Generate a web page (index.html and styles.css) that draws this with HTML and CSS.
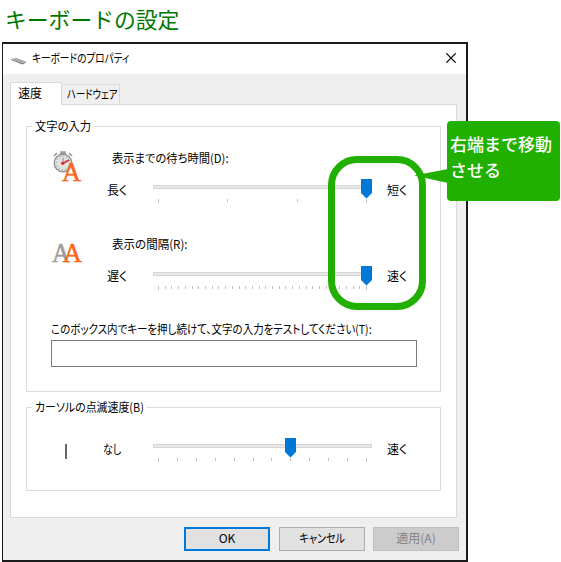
FILE: index.html
```html
<!DOCTYPE html>
<html lang="ja">
<head>
<meta charset="utf-8">
<title>キーボードの設定</title>
<link rel="stylesheet" href="styles.css">
</head>
<body>
<h1>キーボードの設定</h1>
<main class="window">
  <header class="titlebar">
    <svg class="kbd" width="16" height="8" viewBox="0 0 16 8"><path d="M0 1.8 4.5.8 15 4.5 11.5 6.8Z" fill="#c4c4c4"/><path d="M0 2 11.5 6.2 15 4.5V5.5L11.5 7.5 0 3Z" fill="#777"/><path d="M3 2 11 5M5 1.5 13 4.3" stroke="#888" stroke-width=".6"/></svg>
    <span class="t t-title">キーボードのプロパティ</span>
    <svg class="close" width="10" height="10" viewBox="0 0 10 10"><path d="M.3.3 9.7 9.7M9.7.3.3 9.7" stroke="#000" stroke-width="1.2"/></svg>
  </header>
  <nav class="tabs">
    <div class="tab active"><span class="t">速度</span></div>
    <div class="tab"><span class="t t-hard">ハードウェア</span></div>
  </nav>
  <section class="panel">
    <fieldset class="group typing">
      <legend><span class="t t-input">文字の入力</span></legend>
      <div class="setting delay">
        <svg class="icon" width="32" height="34" viewBox="0 0 32 34">
          <path d="M9 1h4v3H9zM2 5l3-3M20 5l-3-3" fill="#999" stroke="#999" stroke-width="1.6"/>
          <circle cx="11" cy="12" r="8.8" fill="#e2e2e2" stroke="#929292" stroke-width="1.4"/>
          <circle cx="11" cy="12" r="6.7" fill="none" stroke="#777" stroke-width="1" stroke-dasharray="1 2.5"/>
          <path d="M10 13 17 9" stroke="#e02828" stroke-width="1.5"/><path d="M11 7v5" stroke="#888"/><circle cx="10.5" cy="12.3" r="1.5" fill="#d22"/>
          <text x="10" y="30" class="letter orange" textLength="19" lengthAdjust="spacingAndGlyphs">A</text>
        </svg>
        <div class="controls">
          <div class="caption"><span class="t t-delay">表示までの待ち時間(D):</span></div>
          <div class="range"><span class="end"><span class="t t-ku">長く</span></span>
            <svg class="slider" width="220" height="26" viewBox="0 0 220 26"><rect x=".5" y="6.5" width="218" height="3" class="track"/><path class="ticks" d="M5.5 20v4M74.5 20v3M144.5 20v3M213.5 20v4"/><path class="thumb" d="M208 0h11v14l-5.5 5.5L208 14Z"/></svg>
            <span class="end far"><span class="t t-ku">短く</span></span></div>
        </div>
      </div>
      <div class="setting repeat">
        <svg class="icon" width="32" height="34" viewBox="0 0 32 34"><text x="0" y="22" class="letter gray" textLength="18" lengthAdjust="spacingAndGlyphs">A</text><text x="11" y="22" class="letter orange" textLength="19" lengthAdjust="spacingAndGlyphs">A</text></svg>
        <div class="controls">
          <div class="caption"><span class="t t-repeat">表示の間隔(R):</span></div>
          <div class="range"><span class="end"><span class="t t-ku">遅く</span></span>
            <svg class="slider" width="220" height="26" viewBox="0 0 220 26"><rect x=".5" y="6.5" width="218" height="3" class="track"/><path class="ticks" d="M5.5 20v4M12.5 20v3M18.5 20v3M25.5 20v3M32.5 20v3M39.5 20v3M45.5 20v3M52.5 20v3M59.5 20v3M65.5 20v3M72.5 20v3M79.5 20v3M86.5 20v3M92.5 20v3M99.5 20v3M106.5 20v3M112.5 20v3M119.5 20v3M126.5 20v3M132.5 20v3M139.5 20v3M146.5 20v3M153.5 20v3M159.5 20v3M166.5 20v3M173.5 20v3M179.5 20v3M186.5 20v3M193.5 20v3M200.5 20v3M206.5 20v3M213.5 20v4"/><path class="thumb" d="M208 0h11v14l-5.5 5.5L208 14Z"/></svg>
            <span class="end far"><span class="t t-ku">速く</span></span></div>
        </div>
      </div>
      <div class="test"><label for="test"><span class="t t-test">このボックス内でキーを押し続けて、文字の入力をテストしてください(T):</span></label>
      <input id="test" type="text"></div>
    </fieldset>
    <fieldset class="group blink">
      <legend><span class="t t-blink">カーソルの点滅速度(B)</span></legend>
      <div class="range"><i class="caret"></i><span class="end"><span class="t t-nashi">なし</span></span>
        <svg class="slider" width="220" height="26" viewBox="0 0 220 26"><rect x=".5" y="6.5" width="218" height="3" class="track"/><path class="ticks" d="M5.5 20v4M24.5 20v3M43.5 20v3M62.5 20v3M81.5 20v3M100.5 20v3M118.5 20v3M137.5 20v3M156.5 20v3M175.5 20v3M194.5 20v3M213.5 20v4"/><path class="thumb" d="M132 0h11v14l-5.5 5.5L132 14Z"/></svg>
        <span class="end far"><span class="t t-ku">速く</span></span></div>
    </fieldset>
  </section>
  <footer>
    <button class="ok"><span class="t">OK</span></button>
    <button><span class="t t-cancel">キャンセル</span></button>
    <button disabled><span class="t t-apply">適用(A)</span></button>
  </footer>
</main>
<div class="ring"></div>
<svg class="pointer" width="34" height="14" viewBox="0 0 34 14"><path d="M0 6.5 34 0v14Z" fill="#21b002"/></svg>
<aside class="callout">右端まで移動<br>させる</aside>
</body>
</html>
```
FILE: styles.css
```css
* { box-sizing: border-box; }
body { margin: 0; width: 561px; height: 562px; overflow: hidden; position: relative; background: #fff; color: #000; font: 12px/16px "Noto Sans CJK JP", sans-serif; }
h1 { margin: 0; height: 42px; padding: 3px 0 0 5px; font-size: 21.8px; line-height: 32px; font-weight: 400; color: #007800; }
.window { margin-left: 2px; width: 466px; height: 520px; border: 2px solid #1b1b1b; border-left-width: 1px; background: #efefef; }
.t { display: inline-block; white-space: nowrap; transform-origin: 0 50%; font-feature-settings: "palt"; }
.t-title { transform: scaleX(.805); }
.t-hard { transform: scaleX(.78); }
.t-input { transform: scaleX(.94); margin-right: -4px; }
.t-delay { transform: scaleX(.94); }
.t-repeat { transform: scaleX(.96); }
.t-test { transform: scaleX(.874); }
.t-blink { transform: scaleX(.91); margin-right: -11px; }
.t-nashi { transform: scaleX(.84); }
.titlebar { display: flex; height: 30px; background: #fff; padding: 6px 10px 0 8px; }
.kbd { margin: 7px 5px 0 0; }
.close { margin: 3px 0 0 auto; }
.tabs { display: flex; align-items: flex-end; height: 31px; padding-left: 7px; position: relative; z-index: 1; }
.tab { height: 21px; width: 58px; border: 1px solid #dadada; border-left: 0; background: #f0f0f0; padding: 1px 0 0 5px; }
.tab.active { height: 23px; width: 52px; background: #fff; border-left: 1px solid #dadada; border-bottom: 0; padding: 2px 0 0 7px; }
.panel { width: 447px; height: 414px; margin: -1px 0 0 7px; border: 1px solid #dadada; background: #fff; padding: 13px 15px 0; }
.group { width: 415px; min-width: 0; margin: 0; padding: 0; border: 1px solid #dcdcdc; }
.group legend { height: 16px; margin-left: 5px; padding: 0 3px; }
.typing { height: 274px; }
.blink { height: 92px; margin-top: 7px; }
.setting { display: flex; height: 87px; }
.delay { height: 88px; padding-top: 16px; }
.repeat { padding-top: 15px; }
.icon { margin-left: 25px; overflow: visible; }
.delay .icon { margin-top: 1px; }
.repeat .icon { margin-top: 3px; }
.controls { flex: 1; margin-left: 2px; }
.caption { height: 29px; padding-left: 26px; }
.repeat .caption { height: 29px; margin-top: -1px; }
.repeat .range { margin-top: 1px; }
.range { display: flex; }
.end { width: 46px; padding-top: 3px; margin-left: 21px; }
.repeat .end { padding-top: 2px; }
.far { width: 30px; margin-left: 14px; }
.slider { display: block; flex: none; }
.track { fill: #e7eaea; stroke: #d6d6d6; }
.ticks { stroke: #c0c0c0; fill: none; }
.thumb { fill: #0078d7; }
.letter { font: 27px "Liberation Serif", serif; stroke-width: .6px; }
.orange { fill: #f7691d; stroke: #f7691d; }
.gray { fill: #9d9d9d; stroke: #9d9d9d; }
.test { padding: 12px 0 0 24px; }
.test label { display: block; height: 19px; }
.test input { display: block; width: 366px; height: 27px; border: 1px solid #7a7a7a; background: #fff; padding: 0; }
.blink .range { margin-top: 23px; }
.caret { width: 2px; height: 15px; margin: 6px 0 0 38px; background: #666; }
.blink .end { margin-left: 36px; width: 50px; }
.blink .far { margin-left: 14px; width: 30px; }
footer { display: flex; gap: 9px; padding: 9px 0 0 181px; }
button { width: 86px; height: 24px; flex: none; padding: 0 0 2px; border: 1px solid #adadad; background: #e1e1e1; color: #000; font: inherit; text-align: center; }
button + button + button { margin-left: -1px; }
button .t { transform-origin: 50% 50%; }
.t-cancel { transform: scaleX(.84); }
.ok { border: 2px solid #0078d7; }
button:disabled { background: #ccc; border-color: #bfbfbf; color: #838383; }
.ring { position: absolute; left: 328px; top: 156px; width: 98px; height: 154px; border: 7px solid #21b002; border-radius: 29px; }
.pointer { position: absolute; left: 414px; top: 169px; }
.callout { position: absolute; left: 447px; top: 121px; width: 113px; height: 80px; border-radius: 4px; padding: 10px 0 0 3px; background: #21b002; color: #fff; font-size: 17px; line-height: 26px; font-weight: 500; }
```
